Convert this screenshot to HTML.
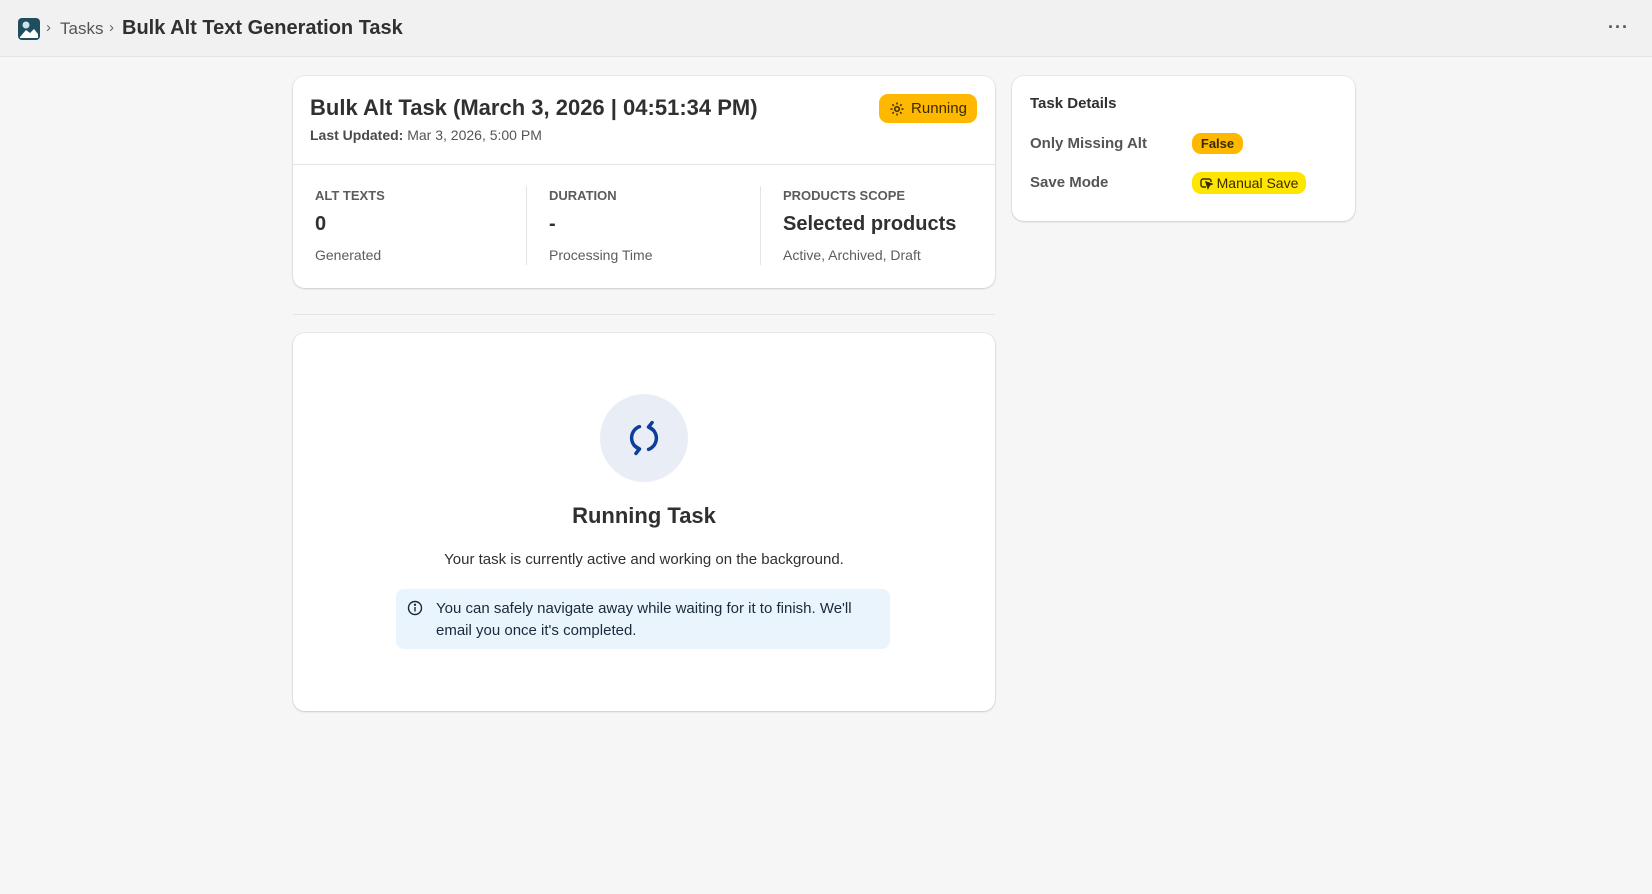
<!DOCTYPE html>
<html><head><meta charset="utf-8"><style>
*{box-sizing:border-box;margin:0;padding:0}
body{width:1652px;height:894px;background:#f6f6f7;font-family:"Liberation Sans",sans-serif;color:#303030;position:relative;overflow:hidden}
.abs{position:absolute}
.hdr{left:0;top:0;width:1652px;height:57px;background:#f1f1f1;border-bottom:1px solid #e3e3e3}
.card{background:#fff;border-radius:12px;box-shadow:0 1px 2px rgba(0,0,0,.12),0 0 0 1px rgba(0,0,0,.05)}
.lbl{font-size:13px;color:#5c5c5c;font-weight:600}
.val{font-size:20px;font-weight:600;color:#303030}
.sub{font-size:14px;color:#5c5c5c}
.badge{border-radius:9px;font-size:14px;display:flex;align-items:center;justify-content:center;color:#3a2a00}
</style></head><body>
<div class="abs hdr"></div>
<svg class="abs" style="left:18px;top:18px" width="22" height="22" viewBox="0 0 22 22"><rect width="22" height="22" rx="4" fill="#1f4f5e"/><path d="M2 19 L8 12 L12 15 L16 11 L20 16 V20 H2Z" fill="#fff"/><circle cx="8" cy="7" r="3.5" fill="#cfe3ea"/></svg>
<div class="abs" style="left:46px;top:19px;font-size:15px;color:#666">›</div>
<div class="abs" style="left:60px;top:19px;font-size:17px;color:#555">Tasks</div>
<div class="abs" style="left:109px;top:19px;font-size:15px;color:#666">›</div>
<div class="abs" style="left:122px;top:17px;font-size:20px;font-weight:700;color:#303030">Bulk Alt Text Generation Task</div>
<div class="abs" style="left:1608px;top:17px;font-size:18px;font-weight:700;color:#555;letter-spacing:1px">···</div>

<div class="abs card" style="left:293px;top:76px;width:702px;height:212px"></div>
<div class="abs" style="left:310px;top:95px;font-size:22px;font-weight:600">Bulk Alt Task (March 3, 2026 | 04:51:34 PM)</div>
<div class="abs" style="left:310px;top:127px;font-size:14px;color:#555"><b style="color:#4a4a4a">Last Updated:</b> Mar 3, 2026, 5:00 PM</div>
<div class="abs badge" style="left:879px;top:94px;width:98px;height:29px;background:#ffb800;font-size:15px;color:#3a2a00;gap:6px"><svg width="16" height="16" viewBox="0 0 16 16" fill="none" stroke="#3a2a00" stroke-width="1.5"><circle cx="8" cy="8" r="2.3"/><path d="M8 1.5v2M8 12.5v2M1.5 8h2M12.5 8h2M3.4 3.4l1.4 1.4M11.2 11.2l1.4 1.4M3.4 12.6l1.4-1.4M11.2 4.8l1.4-1.4"/></svg>Running</div>
<div class="abs" style="left:293px;top:164px;width:702px;border-top:1px solid #e6e6e6"></div>
<div class="abs" style="left:526px;top:186px;height:79px;border-left:1px solid #e3e3e3"></div>
<div class="abs" style="left:760px;top:186px;height:79px;border-left:1px solid #e3e3e3"></div>
<div class="abs lbl" style="left:315px;top:188px">ALT TEXTS</div>
<div class="abs val" style="left:315px;top:213px">0</div>
<div class="abs sub" style="left:315px;top:247px">Generated</div>
<div class="abs lbl" style="left:549px;top:188px">DURATION</div>
<div class="abs val" style="left:549px;top:213px">-</div>
<div class="abs sub" style="left:549px;top:247px">Processing Time</div>
<div class="abs lbl" style="left:783px;top:188px">PRODUCTS SCOPE</div>
<div class="abs val" style="left:783px;top:213px">Selected products</div>
<div class="abs sub" style="left:783px;top:247px">Active, Archived, Draft</div>

<div class="abs" style="left:293px;top:314px;width:702px;border-top:1px solid #e3e3e3"></div>

<div class="abs card" style="left:293px;top:333px;width:702px;height:378px"></div>
<div class="abs" style="left:600px;top:394px;width:88px;height:88px;border-radius:50%;background:#e9edf5"></div>
<svg class="abs" style="left:622px;top:416px" width="44" height="44" viewBox="0 0 24 24" fill="none" stroke="#0b3d9a" stroke-width="1.9" stroke-linecap="round" stroke-linejoin="round"><path d="M9.5 5.8A6.5 6.5 0 0 0 9.5 18"/><path d="M6.8 16.2L9.5 18L7.6 20.4"/><path d="M14.5 18.2A6.5 6.5 0 0 0 14.5 6"/><path d="M17.2 7.8L14.5 6L16.4 3.6"/></svg>
<div class="abs" style="left:293px;top:503px;width:702px;text-align:center;font-size:22px;font-weight:600">Running Task</div>
<div class="abs" style="left:293px;top:551px;width:702px;text-align:center;font-size:15px;color:#303030">Your task is currently active and working on the background.</div>
<div class="abs" style="left:396px;top:589px;width:494px;height:60px;background:#eaf4fd;border-radius:8px"></div>
<svg class="abs" style="left:407px;top:600px" width="16" height="16" viewBox="0 0 16 16" fill="none" stroke="#1a2a3a" stroke-width="1.4"><circle cx="8" cy="8" r="6.5"/><path d="M8 7v4.5"/><circle cx="8" cy="4.8" r=".5" fill="#1a2a3a"/></svg>
<div class="abs" style="left:436px;top:598px;width:440px;font-size:15px;line-height:22px;color:#1a2a3a">You can safely navigate away while waiting for it to finish. We'll email you once it's completed.</div>

<div class="abs card" style="left:1012px;top:76px;width:343px;height:145px"></div>
<div class="abs" style="left:1030px;top:95px;font-size:15px;font-weight:600;color:#303030">Task Details</div>
<div class="abs" style="left:1030px;top:135px;font-size:15px;font-weight:600;color:#555">Only Missing Alt</div>
<div class="abs badge" style="left:1192px;top:133px;width:51px;height:21px;background:#ffb800;font-size:13px;font-weight:600">False</div>
<div class="abs" style="left:1030px;top:174px;font-size:15px;font-weight:600;color:#555">Save Mode</div>
<div class="abs badge" style="left:1192px;top:172px;width:114px;height:22px;background:#ffe600;font-size:14px;gap:4px"><svg width="13" height="13" viewBox="0 0 13 13" fill="none" stroke="#3a2a00" stroke-width="1.4"><path d="M6 10H3a2 2 0 0 1-2-2V4a2 2 0 0 1 2-2h6a2 2 0 0 1 2 2v1"/><path d="M6 5l6 2-2.5 1L8 11z" fill="#3a2a00"/></svg>Manual Save</div>
</body></html>
